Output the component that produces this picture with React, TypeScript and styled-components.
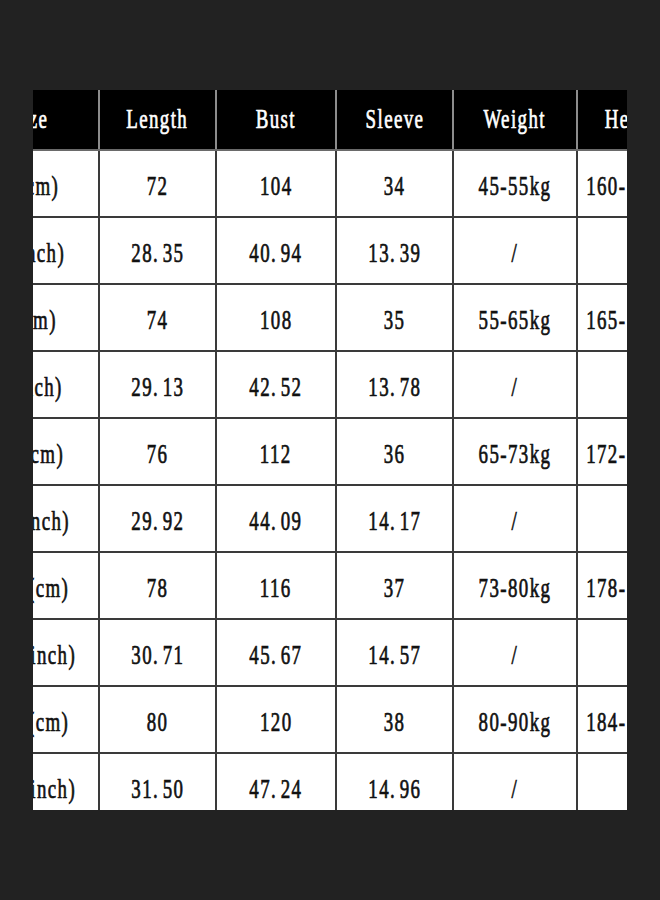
import React from "react";
import styled, { createGlobalStyle } from "styled-components";

const GlobalStyle = createGlobalStyle`
  html, body {
    margin: 0;
    padding: 0;
    background: #222222;
  }
  body {
    width: 660px;
    height: 900px;
    overflow: hidden;
  }
`;

const Page = styled.div`
  box-sizing: border-box;
  width: 660px;
  height: 900px;
  padding: 90px 0 0 33px;
  background: #222222;
`;

const Clip = styled.div`
  width: 594px;
  height: 720px;
  overflow: hidden;
`;

const Table = styled.div`
  display: flex;
  flex-direction: column;
  gap: 2px;
  width: max-content;
  margin-left: -72px;
  background: #6a6a6a;
`;

const COLS = "137px 115px 118px 115px 122px 114px";

const HeaderRow = styled.div`
  display: grid;
  grid-template-columns: ${COLS};
  column-gap: 2px;
  height: 59px;
  background: #8c8c8c;
`;

const Body = styled.div`
  display: grid;
  grid-template-columns: ${COLS};
  grid-auto-rows: 65px;
  gap: 2px;
  background: #3a3a3a;
`;

const Cell = styled.div<{ $head?: boolean }>`
  display: flex;
  align-items: center;
  justify-content: center;
  overflow: visible;
  background: ${(p) => (p.$head ? "#000000" : "#ffffff")};
  color: ${(p) => (p.$head ? "#ffffff" : "#111111")};
`;

const Label = styled.span<{ $head?: boolean }>`
  display: inline-block;
  font-family: "Liberation Serif", "Times New Roman", serif;
  font-weight: 400;
  font-size: 27px;
  line-height: 1;
  letter-spacing: 2px;
  white-space: nowrap;
  -webkit-text-stroke: 0.7px currentColor;
  transform: scaleX(0.7);
  margin-top: ${(p) => (p.$head ? "0" : "6px")};
`;

const Dot = styled.span`
  margin-right: 5px;
`;

const headers = ["Size", "Length", "Bust", "Sleeve", "Weight", "Height"];

const sizes = ["M", "L", "XL", "2XL", "3XL"];
const cm = [
  ["72", "104", "34", "45-55kg", "160-165cm"],
  ["74", "108", "35", "55-65kg", "165-172cm"],
  ["76", "112", "36", "65-73kg", "172-178cm"],
  ["78", "116", "37", "73-80kg", "178-184cm"],
  ["80", "120", "38", "80-90kg", "184-190cm"],
];
const inch = [
  ["28.35", "40.94", "13.39", "/", ""],
  ["29.13", "42.52", "13.78", "/", ""],
  ["29.92", "44.09", "14.17", "/", ""],
  ["30.71", "45.67", "14.57", "/", ""],
  ["31.50", "47.24", "14.96", "/", ""],
];

function Value({ text }: { text: string }) {
  if (/^\d+\.\d+$/.test(text)) {
    const [a, b] = text.split(".");
    return (
      <Label>
        {a}
        <Dot>.</Dot>
        {b}
      </Label>
    );
  }
  return <Label>{text}</Label>;
}

export default function App() {
  const rows: string[][] = [];
  sizes.forEach((s, i) => {
    rows.push([`${s}(cm)`, ...cm[i]]);
    rows.push([`${s}(inch)`, ...inch[i]]);
  });
  return (
    <>
      <GlobalStyle />
      <Page>
        <Clip>
          <Table>
            <HeaderRow>
              {headers.map((h) => (
                <Cell $head key={h}>
                  <Label $head>{h}</Label>
                </Cell>
              ))}
            </HeaderRow>
            <Body>
              {rows.map((r, ri) =>
                r.map((c, ci) => (
                  <Cell key={`${ri}-${ci}`}>
                    {c ? <Value text={c} /> : null}
                  </Cell>
                ))
              )}
            </Body>
          </Table>
        </Clip>
      </Page>
    </>
  );
}
